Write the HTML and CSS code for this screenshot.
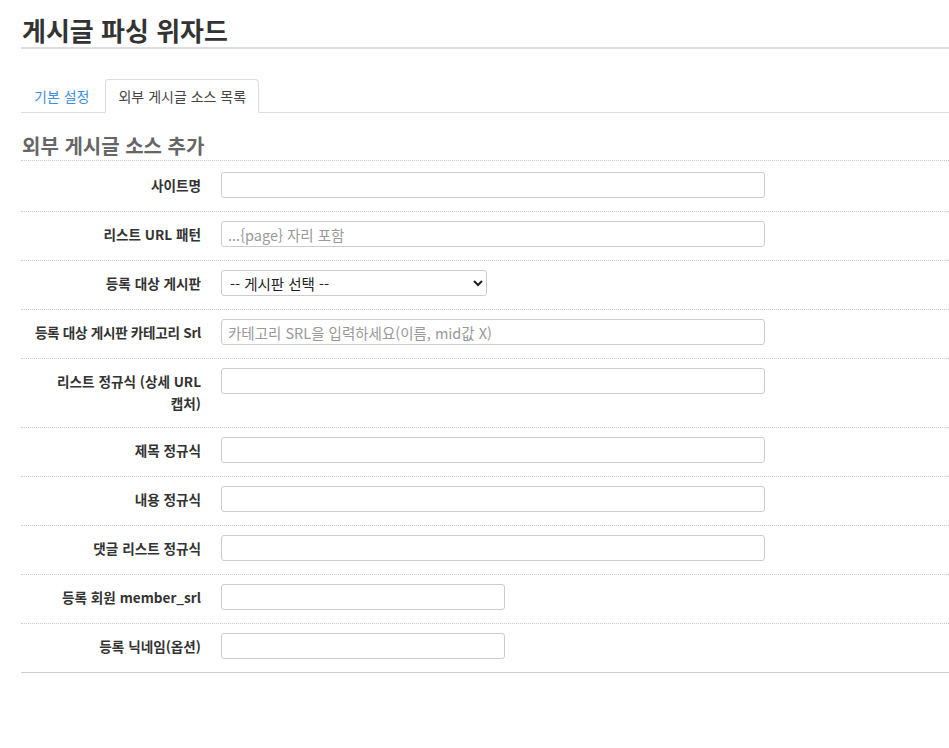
FILE: index.html
```html
<!DOCTYPE html>
<html lang="ko">
<head>
    <meta charset="UTF-8">
    <meta name="viewport" content="width=device-width, initial-scale=1.0">
    <title>게시글 파싱 위자드</title>
    <link rel="stylesheet" href="styles.css">
</head>
<body>
    <div class="page">
        <h1 class="titulo">게시글 파싱 위자드</h1>

        <ul class="tabs">
            <li><a href="#">기본 설정</a></li>
            <li class="active"><a href="#">외부 게시글 소스 목록</a></li>
        </ul>

        <h2 class="seccion">외부 게시글 소스 추가</h2>

        <div class="form">
            <div class="fila">
                <label class="rotulo">사이트명</label>
                <input type="text" class="campo">
            </div>
            <div class="fila">
                <label class="rotulo">리스트 URL 패턴</label>
                <input type="text" class="campo" placeholder="...{page} 자리 포함">
            </div>
            <div class="fila">
                <label class="rotulo">등록 대상 게시판</label>
                <select class="campo selector">
                    <option>-- 게시판 선택 --</option>
                </select>
            </div>
            <div class="fila">
                <label class="rotulo nowrap">등록 대상 게시판 카테고리 Srl</label>
                <input type="text" class="campo" placeholder="카테고리 SRL을 입력하세요(이름, mid값 X)">
            </div>
            <div class="fila">
                <label class="rotulo">리스트 정규식 (상세 URL<br>캡처)</label>
                <input type="text" class="campo">
            </div>
            <div class="fila">
                <label class="rotulo">제목 정규식</label>
                <input type="text" class="campo">
            </div>
            <div class="fila">
                <label class="rotulo">내용 정규식</label>
                <input type="text" class="campo">
            </div>
            <div class="fila">
                <label class="rotulo">댓글 리스트 정규식</label>
                <input type="text" class="campo">
            </div>
            <div class="fila">
                <label class="rotulo">등록 회원 member_srl</label>
                <input type="text" class="campo corto">
            </div>
            <div class="fila">
                <label class="rotulo">등록 닉네임(옵션)</label>
                <input type="text" class="campo corto">
            </div>
        </div>
    </div>
</body>
</html>
```

FILE: styles.css
```css
body {
    background-color: white;
    color: #333;
    font-family: "Noto Sans CJK KR", "Noto Sans", sans-serif;
    font-size: 13px;
    margin: 0;
    padding: 0;
}

.page {
    padding: 15px 0 0 21px;
}

.titulo {
    margin: 0;
    padding: 0 0 2px 1px;
    font-size: 26px;
    line-height: 30px;
    font-weight: bold;
    color: #333;
    border-bottom: 2px solid #ddd;
}

.tabs {
    list-style: none;
    margin: 30px 0 0 0;
    padding: 0;
    display: flex;
    border-bottom: 1px solid #ddd;
}

.tabs li {
    margin-right: 3px;
    margin-bottom: -1px;
}

.tabs a {
    display: block;
    padding: 8px 12px;
    line-height: 16px;
    font-size: 14px;
    color: #3d8ee0;
    text-decoration: none;
    border: 1px solid transparent;
    border-radius: 4px 4px 0 0;
}

.tabs li.active a {
    color: #444;
    background-color: white;
    border-color: #ddd #ddd transparent;
}

.seccion {
    margin: 19px 0 0 0;
    padding-left: 1px;
    font-size: 20px;
    line-height: 28px;
    font-weight: bold;
    color: #666;
}

.form {
    border-bottom: 1px solid #ccc;
}

.fila {
    display: flex;
    align-items: flex-start;
    gap: 20px;
    padding: 9px 0 13px;
    border-top: 1px dotted #ccc;
}

.fila:first-child {
    padding-top: 11px;
}

.rotulo {
    flex: 0 0 180px;
    text-align: right;
    font-weight: bold;
    font-size: 13.6px;
    line-height: 22px;
    padding-top: 2px;
    color: #333;
}

.nowrap {
    white-space: nowrap;
    letter-spacing: -0.3px;
}

.campo {
    box-sizing: border-box;
    width: 544px;
    height: 26px;
    border: 1px solid #ccc;
    border-radius: 3px;
    padding: 0 6px;
    font-family: "Noto Sans CJK KR", "Noto Sans", sans-serif;
    font-size: 14.5px;
    color: #333;
    background-color: white;
}

.campo::placeholder {
    color: #999;
}

.corto {
    width: 284px;
}

.selector {
    width: 266px;
    color: #222;
    padding: 0 4px;
}
```
